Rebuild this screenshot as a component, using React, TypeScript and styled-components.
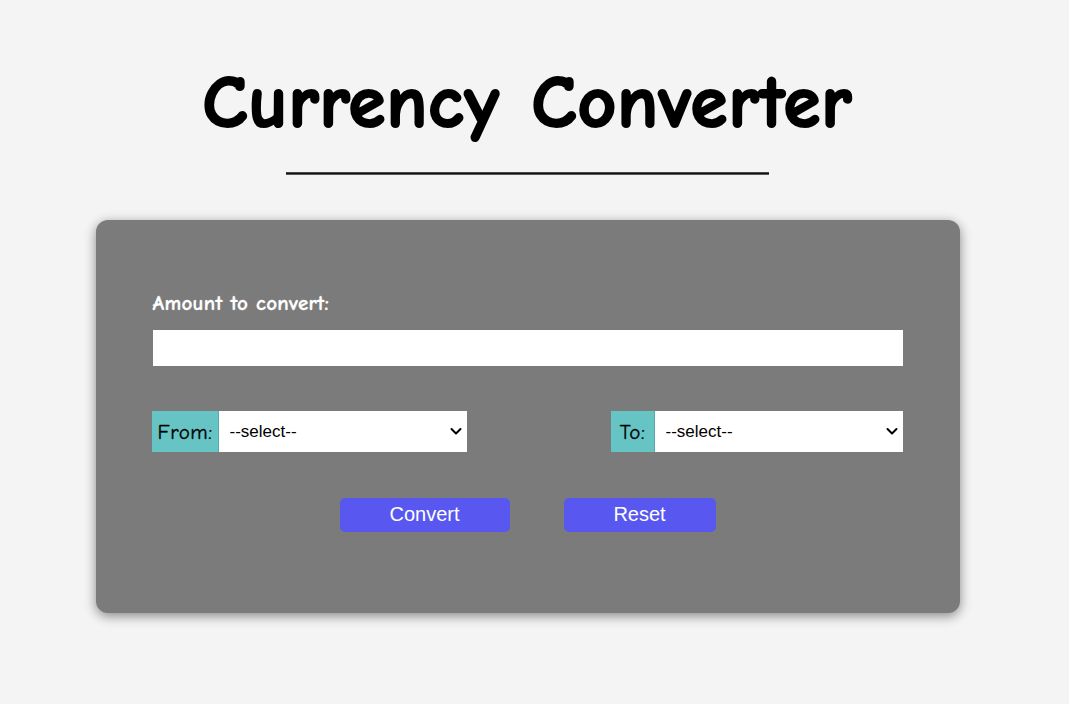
import React, { useState } from "react";
import styled, { createGlobalStyle } from "styled-components";

const Global = createGlobalStyle`
  html, body { margin: 0; padding: 0; background: #f4f4f4; }
  body { font-family: "Comic Sans MS", "Comic Neue", cursive; }
`;

const Page = styled.div`
  width: 1055px;
  height: 704px;
  display: flex;
  flex-direction: column;
  align-items: center;
  box-sizing: border-box;
  padding-top: 56px;
`;

const Title = styled.h1`
  margin: 0;
  font-family: "Comic Sans MS", "Comic Neue", cursive;
  font-size: 75px;
  line-height: 94px;
  font-weight: 700;
  color: #000;
  -webkit-text-stroke: 2.2px #000;
  letter-spacing: 1px;
  word-spacing: 4px;
`;

const Rule = styled.div`
  width: 483px;
  height: 3px;
  margin-top: 22px;
  background: linear-gradient(#777, #111 35%, #111 65%, #999);
`;

const Card = styled.div`
  margin-top: 45px;
  width: 864px;
  height: 393px;
  box-sizing: border-box;
  background: #7b7b7b;
  border-radius: 12px;
  box-shadow: 0 3px 12px rgba(0, 0, 0, 0.45);
  padding: 72px 57px 0 57px;
  display: flex;
  flex-direction: column;
`;

const Label = styled.label`
  color: #fff;
  font-family: "Comic Sans MS", "Comic Neue", cursive;
  font-weight: 700;
  font-size: 21px;
  line-height: 22px;
  letter-spacing: 0.3px;
  -webkit-text-stroke: 0.3px #fff;
  margin: 0 0 16px 0;
`;

const AmountInput = styled.input`
  width: 750px;
  height: 36px;
  box-sizing: border-box;
  border: none;
  outline: none;
  background: #fff;
  padding: 0 8px;
  font-size: 16px;
`;

const Row = styled.div`
  margin-top: 45px;
  display: flex;
  justify-content: space-between;
  margin-left: -1px;
`;

const Group = styled.div`
  display: flex;
  height: 41px;
`;

const Tag = styled.span<{ $w: number }>`
  display: flex;
  align-items: center;
  justify-content: center;
  box-sizing: border-box;
  width: ${(p) => p.$w}px;
  background: #66c4c4;
  color: #000;
  font-family: "Comic Sans MS", "Comic Neue", cursive;
  font-size: 21px;
  letter-spacing: 0.5px;
  -webkit-text-stroke: 0.3px #000;
  padding-left: 1px;
  border-right: 1px solid #5aa9a9;
`;

const SelectWrap = styled.div`
  position: relative;
  display: flex;
`;

const Select = styled.select<{ $w: number }>`
  width: ${(p) => p.$w}px;
  height: 41px;
  box-sizing: border-box;
  border: none;
  outline: none;
  border-radius: 0;
  appearance: none;
  -webkit-appearance: none;
  background: #fff;
  font-family: "Liberation Sans", Arial, sans-serif;
  font-size: 17px;
  color: #000;
  padding: 0 30px 0 11px;
`;

const Chevron = styled.svg`
  position: absolute;
  right: 5px;
  top: 16px;
  width: 12px;
  height: 9px;
  pointer-events: none;
`;

const Buttons = styled.div`
  margin-top: 46px;
  display: flex;
  justify-content: center;
  gap: 54px;
`;

const Button = styled.button<{ $w: number }>`
  width: ${(p) => p.$w}px;
  height: 34px;
  border: none;
  border-radius: 5px;
  background: #5858f0;
  color: #fff;
  font-family: "Liberation Sans", Arial, sans-serif;
  font-size: 20px;
  line-height: 32px;
  cursor: pointer;
  padding: 0 0 2px 0;
`;

function CurrencySelect({ w }: { w: number }) {
  return (
    <SelectWrap>
      <Select $w={w} defaultValue="">
        <option value="">--select--</option>
        <option value="USD">USD</option>
        <option value="EUR">EUR</option>
        <option value="GBP">GBP</option>
      </Select>
      <Chevron viewBox="0 0 12 9">
        <path d="M1.5 2 L6 6.5 L10.5 2" fill="none" stroke="#000" strokeWidth="2" strokeLinecap="round" strokeLinejoin="round" />
      </Chevron>
    </SelectWrap>
  );
}

export default function App() {
  const [amount, setAmount] = useState("");
  return (
    <>
      <Global />
      <Page>
        <Title>Currency Converter</Title>
        <Rule />
        <Card>
          <Label htmlFor="amt">Amount to convert:</Label>
          <AmountInput id="amt" value={amount} onChange={(e) => setAmount(e.target.value)} />
          <Row>
            <Group>
              <Tag $w={67}>From:</Tag>
              <CurrencySelect w={248} />
            </Group>
            <Group>
              <Tag $w={44}>To:</Tag>
              <CurrencySelect w={248} />
            </Group>
          </Row>
          <Buttons>
            <Button $w={170}>Convert</Button>
            <Button $w={152}>Reset</Button>
          </Buttons>
        </Card>
      </Page>
    </>
  );
}
